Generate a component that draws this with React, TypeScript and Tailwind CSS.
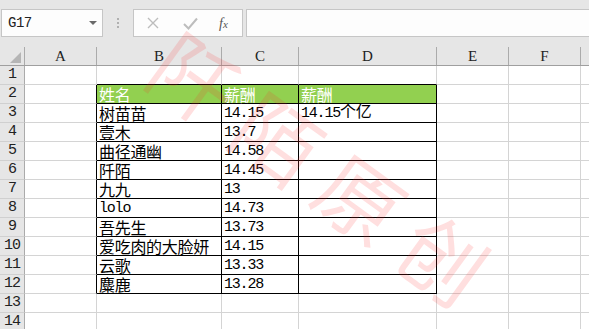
import React from 'react';

const cols = ['A', 'B', 'C', 'D', 'E', 'F', 'G'];
const widths = ['w-[72px]', 'w-[125px]', 'w-[77px]', 'w-[138px]', 'w-[72px]', 'w-[72px]', 'w-[72px]'];

type Cell = { text?: string; num?: boolean; suffix?: string };

const data: Record<number, Record<string, Cell>> = {
  2: { B: { text: '姓名' }, C: { text: '薪酬' }, D: { text: '薪酬' } },
  3: { B: { text: '树苗苗' }, C: { text: '14.15', num: true }, D: { text: '14.15', num: true, suffix: '个亿' } },
  4: { B: { text: '壹木' }, C: { text: '13.7', num: true } },
  5: { B: { text: '曲径通幽' }, C: { text: '14.58', num: true } },
  6: { B: { text: '阡陌' }, C: { text: '14.45', num: true } },
  7: { B: { text: '九九' }, C: { text: '13', num: true } },
  8: { B: { text: 'lolo', num: true }, C: { text: '14.73', num: true } },
  9: { B: { text: '吾先生' }, C: { text: '13.73', num: true } },
  10: { B: { text: '爱吃肉的大脸妍' }, C: { text: '14.15', num: true } },
  11: { B: { text: '云歌' }, C: { text: '13.33', num: true } },
  12: { B: { text: '麋鹿' }, C: { text: '13.28', num: true } },
};

const inTable = (r: number, c: number) => r >= 2 && r <= 12 && c >= 1 && c <= 3;

const mono = "font-['Liberation_Mono','DejaVu_Sans_Mono',monospace] text-[15px] tracking-[-1.2px]";
const cjk = "font-['Noto_Sans_CJK_SC',sans-serif] text-[16px] tracking-[-0.3px]";

function GridCell({ r, c }: { r: number; c: number }) {
  const col = cols[c];
  const cell = data[r]?.[col];
  // black edge when either side of the line belongs to the table
  const rightBlack = inTable(r, c) || inTable(r, c + 1);
  const bottomBlack = inTable(r, c) || inTable(r + 1, c);
  const green = r === 2 && inTable(r, c);
  return (
    <div
      className={`${widths[c]} h-[19px] shrink-0 border-r border-b flex items-end pl-[2px] whitespace-nowrap leading-[17px] ${
        rightBlack ? 'border-r-black' : 'border-r-[#d4d4d4]'
      } ${bottomBlack ? 'border-b-black' : 'border-b-[#d4d4d4]'} ${green ? 'bg-[#92d050] text-white' : 'bg-white text-black'}`}
    >
      {cell && (
        <span className={cell.num ? mono : cjk}>
          {cell.text}
          {cell.suffix && <span className={cjk}>{cell.suffix}</span>}
        </span>
      )}
    </div>
  );
}

export default function App() {
  const rows = Array.from({ length: 14 }, (_, i) => i + 1);
  return (
    <div className="relative w-[589px] h-[329px] overflow-hidden bg-[#e6e6e6] select-none">
      {/* formula bar */}
      <div className="h-[47px] flex items-start pt-[9px] pl-[1px]">
        <div className="relative w-[102px] h-[28px] bg-[#fdfdfd] border border-[#c6c6c6] flex items-center pl-[6px]">
          <span className="font-['Liberation_Mono',monospace] text-[14px] tracking-[-0.5px] text-[#222]">G17</span>
          <div className="absolute right-[5px] top-[11px] w-0 h-0 border-l-[4px] border-r-[4px] border-t-[4px] border-l-transparent border-r-transparent border-t-[#6a6a6a]" />
        </div>
        <div className="w-[30px] h-[28px] flex flex-col items-center justify-center gap-[2px]">
          <div className="w-[2px] h-[2px] bg-[#b0b0b0]" />
          <div className="w-[2px] h-[2px] bg-[#b0b0b0]" />
          <div className="w-[2px] h-[2px] bg-[#b0b0b0]" />
        </div>
        <div className="w-[110px] h-[28px] bg-[#fdfdfd] border border-[#c6c6c6] flex items-center">
          <svg className="ml-[13px]" width="12" height="12" viewBox="0 0 12 12">
            <path d="M1 1L11 11M11 1L1 11" stroke="#bdbdbd" strokeWidth="1.4" fill="none" />
          </svg>
          <svg className="ml-[24px]" width="15" height="13" viewBox="0 0 15 13">
            <path d="M1 7L5.5 11.5L14 1.5" stroke="#bdbdbd" strokeWidth="2" fill="none" />
          </svg>
          <span className="ml-[21px] font-['Liberation_Serif',serif] italic text-[14px] text-[#555]">
            f<span className="text-[11px]">x</span>
          </span>
        </div>
        <div className="ml-[3px] flex-1 h-[28px] bg-[#fdfdfd] border-y border-l border-[#c6c6c6]" />
      </div>

      {/* column headers */}
      <div className="flex h-[19px] border-b border-b-[#9f9f9f]">
        <div className="w-[25px] shrink-0 border-r border-r-[#ababab] flex items-end pl-[10px] pb-[2px]">
          <svg width="11" height="11" viewBox="0 0 11 11">
            <path d="M11 0L11 11L0 11Z" fill="#b5b5b5" />
          </svg>
        </div>
        {cols.map((c, i) => (
          <div
            key={c}
            className={`${widths[i]} shrink-0 border-r border-r-[#ababab] flex items-end justify-center font-['Liberation_Serif',serif] text-[15px] leading-[18px] text-[#222]`}
          >
            {c}
          </div>
        ))}
      </div>

      {/* rows */}
      {rows.map((r) => (
        <div key={r} className="flex">
          <div className="w-[25px] h-[19px] shrink-0 border-r border-r-[#ababab] border-b border-b-[#d0d0d0] flex items-end justify-center font-['Liberation_Mono',monospace] text-[15px] tracking-[-1px] leading-[18px] text-[#222]">
            {r}
          </div>
          {cols.map((_, c) => (
            <GridCell key={c} r={r} c={c} />
          ))}
        </div>
      ))}

      {/* watermark */}
      <div className="pointer-events-none absolute left-[124px] top-[130px] origin-center rotate-[36deg] whitespace-nowrap font-['Noto_Sans_CJK_SC',sans-serif] text-[84px] leading-none tracking-[18px] text-[rgba(255,40,40,0.15)]">
        阡陌原创
      </div>
    </div>
  );
}
